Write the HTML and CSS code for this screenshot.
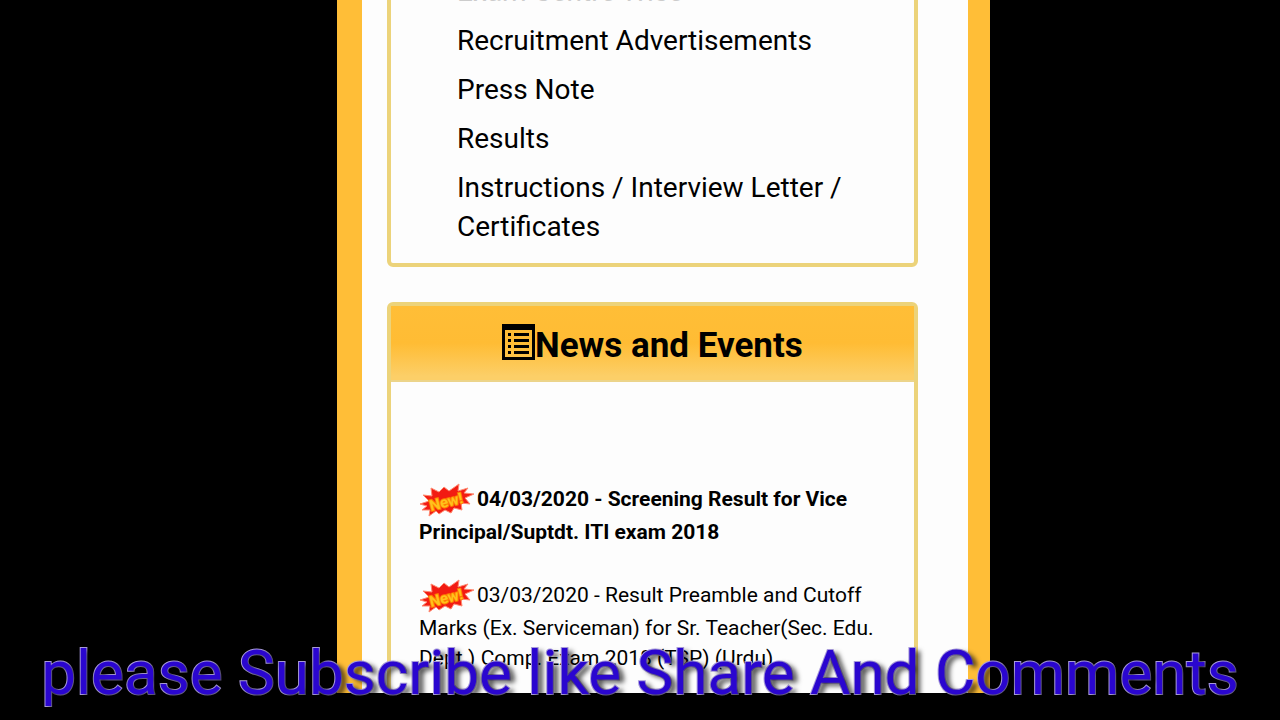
FILE: index.html
```
<!DOCTYPE html>
<html lang="en">
<head>
    <meta charset="utf-8">
    <title>News and Events</title>
    <link rel="stylesheet" href="styles.css">
</head>
<body>
    <!-- Burst drawing shared by the news items -->
    <svg class="sprite" aria-hidden="true">
        <symbol id="new-burst" viewBox="0 0 56 34">
            <path fill="#f21b12" stroke="#ff8a70" stroke-width="1" d="M1 21 L10 18 L4 12 L13 13 L12 5 L20 9 L25 4 L30 8 L40 1 L39 8 L49 5 L45 10 L55 11 L46 15 L51 21 L42 20 L43 27 L35 25 L32 30 L26 27 L20 31 L17 28 L10 33 L11 27 L3 27 L8 23 Z"/>
            <text class="burst-text" x="10" y="24" transform="rotate(-14 27 18)">New!</text>
        </symbol>
    </svg>

    <main class="screen">
        <section class="card links-card">
            <ul class="links">
                <li><a class="faded" href="#">Exam Centre Wise</a></li>
                <li><a href="#">Recruitment Advertisements</a></li>
                <li><a href="#">Press Note</a></li>
                <li><a href="#">Results</a></li>
                <li><a href="#">Instructions / Interview Letter / Certificates</a></li>
            </ul>
        </section>

        <section class="card news-card">
            <h2 class="card-title">
                <svg class="list-icon" viewBox="0 0 33 36" aria-hidden="true">
                    <path fill-rule="evenodd" d="M0 0h33v36H0z M3 6v27h27V6z"/>
                    <path d="M6 9h3v3H6z M12 9h15v3H12z M6 15h3v3H6z M12 15h15v3H12z M6 21h3v3H6z M12 21h15v3H12z M6 27h3v3H6z M12 27h15v3H12z"/>
                </svg>
                <span>News and Events</span>
            </h2>
            <div class="news">
                <a class="news-item latest" href="#"><svg class="burst" aria-hidden="true"><use href="#new-burst"/></svg>04/03/2020 - Screening Result for Vice Principal/Suptdt. ITI exam 2018</a>
                <a class="news-item" href="#"><svg class="burst" aria-hidden="true"><use href="#new-burst"/></svg>03/03/2020 - Result Preamble and Cutoff Marks (Ex. Serviceman) for Sr. Teacher(Sec. Edu. Dept.) Comp. Exam 2018 (TSP) (Urdu)</a>
            </div>
        </section>
    </main>

    <p class="caption">please Subscribe like Share And Comments</p>
</body>
</html>
```
FILE: styles.css
```
* {
    box-sizing: border-box;
}

body {
    margin: 0;
    height: 100vh;
    overflow: hidden;
    position: relative;
    padding-bottom: 27px;
    background-color: #000;
    color: #000;
    font-family: Roboto, "Liberation Sans", sans-serif;
}

a {
    color: inherit;
    text-decoration: none;
}

.sprite {
    display: none;
}

/* Page seen between the black side bars */
.screen {
    width: 51%;
    height: 100%;
    margin-left: 337px;
    padding: 0 50px 0 25px;
    overflow: hidden;
    background-color: #fdfdfd;
    border: solid #ffbe37;
    border-width: 0 22px 0 25px;
}

.card {
    border: 4px solid #ecd37a;
    border-radius: 6px;
}

/* The list is scrolled partly out of view */
.links-card {
    margin-top: -38px;
    margin-bottom: 35px;
}

.links {
    display: flex;
    flex-direction: column;
    gap: 10px;
    margin: 0;
    padding: 6px 40px 17px 66px;
    list-style: none;
    font-size: 28px;
    line-height: 39px;
}

.faded {
    color: #ccc;
}

/* News and Events */
.card-title {
    display: flex;
    justify-content: center;
    align-items: center;
    margin: 0;
    height: 76px;
    padding-top: 6px;
    border-bottom: 2px solid #ecd48a;
    background: linear-gradient(#ffbe37 0%, #ffbc34 50%, #fccf68 95%);
    font-size: 35px;
    line-height: 40px;
}

.list-icon {
    width: 33px;
    height: 36px;
    margin-bottom: 8px;
}

.news {
    padding: 101px 28px 20px;
    font-size: 21px;
    line-height: 30px;
}

.news-item {
    display: block;
    margin-bottom: 32px;
}

.latest {
    font-weight: bold;
}

.burst {
    width: 56px;
    height: 34px;
    margin-right: 2px;
    vertical-align: middle;
}

.burst-text {
    fill: #ffc21c;
    stroke: #ff7a00;
    stroke-width: 2px;
    paint-order: stroke;
    font-size: 15px;
    font-weight: bold;
}

/* Caption laid over the bottom of the page */
.caption {
    position: absolute;
    left: 0;
    right: 0;
    bottom: 11px;
    margin: 0;
    text-align: center;
    white-space: nowrap;
    color: #2a06cf;
    font-size: 62px;
    line-height: 72px;
    -webkit-text-stroke: 2px #a99cdc;
    paint-order: stroke fill;
    text-shadow: 5px 3px 5px rgba(0, 0, 0, 0.7);
}
```
